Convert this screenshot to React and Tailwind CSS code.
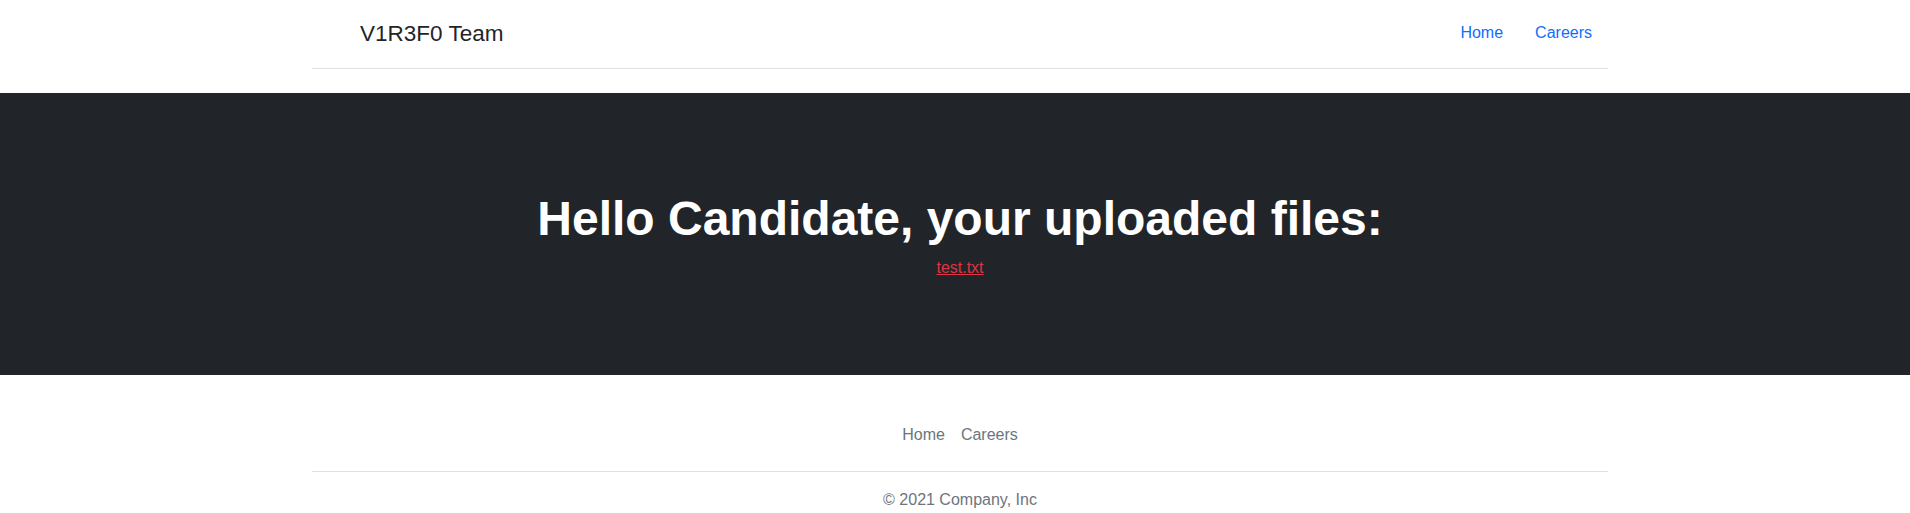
const font = { fontFamily: '"Liberation Sans", Arial, sans-serif' }

const Header = () => (
  <div className="mx-auto w-[1320px] px-3">
    <header className="flex h-[69px] items-center border-b border-[#dee2e6] mb-6">
      <a href="#" className="flex items-center mr-auto text-[#212529] no-underline">
        <span className="inline-block w-10 h-8 mr-2" />
        <span className="text-[22.5px] leading-[1.5]">V1R3F0 Team</span>
      </a>
      <ul className="flex mb-0.5">
        <li>
          <a href="#" className="block px-4 py-2 text-base leading-6 text-[#0d6efd]">Home</a>
        </li>
        <li>
          <a href="#" className="block px-4 py-2 text-base leading-6 text-[#0d6efd]">Careers</a>
        </li>
      </ul>
    </header>
  </div>
)

const Hero = () => (
  <div className="bg-[#212529] pt-[97px] pb-[95px] text-center">
    <h1 className="text-[48px] leading-[1.2] font-bold text-white mb-2">
      Hello Candidate, your uploaded files:
    </h1>
    <p className="text-base leading-6">
      <a href="#" className="text-[#dc3545] underline">test.txt</a>
    </p>
  </div>
)

const Footer = () => (
  <div className="mx-auto w-[1320px] px-3">
    <footer className="py-4 my-6">
      <ul className="flex justify-center border-b border-[#dee2e6] pb-4 mb-4">
        <li>
          <a href="#" className="block px-2 py-2 text-base leading-6 text-[#6c757d]">Home</a>
        </li>
        <li>
          <a href="#" className="block px-2 py-2 text-base leading-6 text-[#6c757d]">Careers</a>
        </li>
      </ul>
      <p className="text-center text-base leading-6 text-[#6c757d]">© 2021 Company, Inc</p>
    </footer>
  </div>
)

export default function App() {
  return (
    <div className="w-full overflow-hidden bg-white text-[#212529]" style={font}>
      <div className="w-[1920px]">
        <Header />
        <Hero />
        <Footer />
      </div>
    </div>
  )
}
